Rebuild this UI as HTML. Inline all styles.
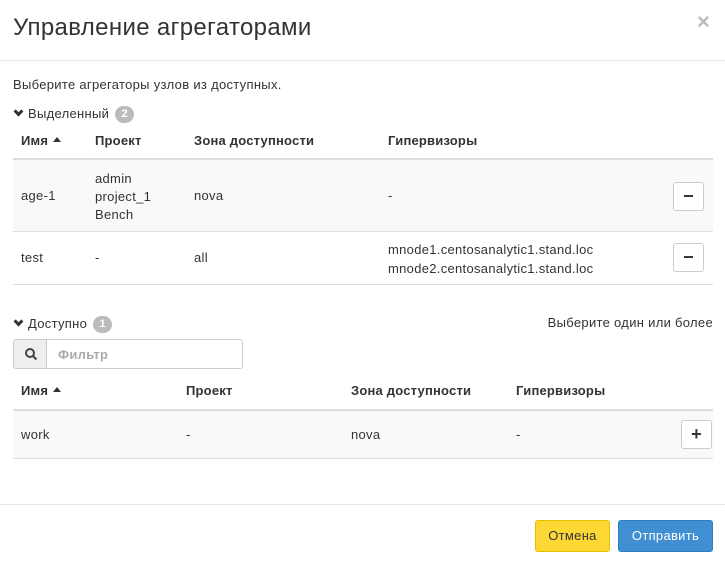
<!DOCTYPE html>
<html><head><meta charset="utf-8"><style>
*{box-sizing:border-box}
body{margin:0;width:725px;height:564px;background:#fff;font-family:"Liberation Sans","DejaVu Sans",sans-serif;color:#333;font-size:13px;letter-spacing:0.3px;position:relative;overflow:hidden}
.a{position:absolute;white-space:nowrap}
.b{font-weight:bold;letter-spacing:0.2px}
.line{position:absolute;height:1px;background:#ddd}
.badge{display:inline-block;background:#bbb;color:#fff;border-radius:10px;font-size:11px;font-weight:bold;width:19px;height:17px;line-height:17px;text-align:center;vertical-align:middle;margin-left:2px;letter-spacing:0}
.btn{position:absolute;width:31px;height:29px;border:1px solid #ccc;border-radius:3px;background:#fff;text-align:center;line-height:26px;font-weight:bold;font-size:18px}
.chev{display:inline-block;width:7px;height:7px;border-right:3px solid #333;border-bottom:3px solid #333;transform:rotate(45deg);margin:0 6px 3px 2px}
.car{display:inline-block;width:0;height:0;border-left:4px solid transparent;border-right:4px solid transparent;border-bottom:5px solid #333;margin-left:5px;vertical-align:3px}
</style></head><body>
<div class="a" style="left:13px;top:14px;font-size:24px;color:#333;letter-spacing:0.35px">Управление агрегаторами</div>
<div class="a" style="left:697px;top:9px;font-size:22px;color:#bbb;font-weight:bold">×</div>
<div class="line" style="left:0;top:60px;width:725px;background:#e5e5e5"></div>
<div class="a" style="left:13px;top:77px">Выберите агрегаторы узлов из доступных.</div>
<div class="a" style="left:13px;top:106px"><span class="chev"></span>Выделенный <span class="badge">2</span></div>
<div class="a b" style="left:21px;top:133px">Имя<span class="car"></span></div>
<div class="a b" style="left:95px;top:133px">Проект</div>
<div class="a b" style="left:194px;top:133px">Зона доступности</div>
<div class="a b" style="left:388px;top:133px">Гипервизоры</div>
<div class="line" style="left:13px;top:158px;width:700px;height:2px"></div>
<div class="a" style="left:13px;top:160px;width:700px;height:71px;background:#f9f9f9"></div>
<div class="a" style="left:21px;top:188px">age-1</div>
<div class="a" style="left:95px;top:170px;line-height:18px">admin<br>project_1<br>Bench</div>
<div class="a" style="left:194px;top:188px">nova</div>
<div class="a" style="left:388px;top:188px">-</div>
<div class="btn" style="left:673px;top:182px">−</div>
<div class="line" style="left:13px;top:231px;width:700px"></div>
<div class="a" style="left:21px;top:250px">test</div>
<div class="a" style="left:95px;top:250px">-</div>
<div class="a" style="left:194px;top:250px">all</div>
<div class="a" style="left:388px;top:240px;line-height:19px">mnode1.centosanalytic1.stand.loc<br>mnode2.centosanalytic1.stand.loc</div>
<div class="btn" style="left:673px;top:243px">−</div>
<div class="line" style="left:13px;top:284px;width:700px"></div>
<div class="a" style="left:13px;top:316px"><span class="chev"></span>Доступно <span class="badge">1</span></div>
<div class="a" style="right:12px;top:315px">Выберите один или более</div>
<div class="a" style="left:13px;top:339px;width:34px;height:30px;background:#eee;border:1px solid #ccc;border-radius:3px 0 0 3px">
<svg width="14" height="14" viewBox="0 0 14 14" style="position:absolute;left:10px;top:7px"><circle cx="6" cy="6" r="4" stroke="#444" stroke-width="2" fill="none"/><path d="M9 9l3.5 3.5" stroke="#444" stroke-width="2"/></svg></div>
<div class="a" style="left:46px;top:339px;width:197px;height:30px;border:1px solid #ccc;border-radius:0 3px 3px 0;color:#aaa;font-weight:bold;padding:7px 0 0 11px">Фильтр</div>
<div class="a b" style="left:21px;top:383px">Имя<span class="car"></span></div>
<div class="a b" style="left:186px;top:383px">Проект</div>
<div class="a b" style="left:351px;top:383px">Зона доступности</div>
<div class="a b" style="left:516px;top:383px">Гипервизоры</div>
<div class="line" style="left:13px;top:409px;width:700px;height:2px"></div>
<div class="a" style="left:13px;top:411px;width:700px;height:47px;background:#f9f9f9"></div>
<div class="a" style="left:21px;top:427px">work</div>
<div class="a" style="left:186px;top:427px">-</div>
<div class="a" style="left:351px;top:427px">nova</div>
<div class="a" style="left:516px;top:427px">-</div>
<div class="btn" style="left:681px;top:420px">+</div>
<div class="line" style="left:13px;top:458px;width:700px"></div>
<div class="line" style="left:0;top:504px;width:725px;background:#e5e5e5"></div>
<div class="a" style="left:535px;top:520px;width:75px;height:32px;background:#fdd835;border:1px solid #e6c000;border-radius:3px;text-align:center;line-height:30px;color:#333">Отмена</div>
<div class="a" style="left:618px;top:520px;width:95px;height:32px;background:#3f8fd2;border:1px solid #2f7cbf;border-radius:3px;text-align:center;line-height:30px;color:#fff">Отправить</div>
</body></html>
